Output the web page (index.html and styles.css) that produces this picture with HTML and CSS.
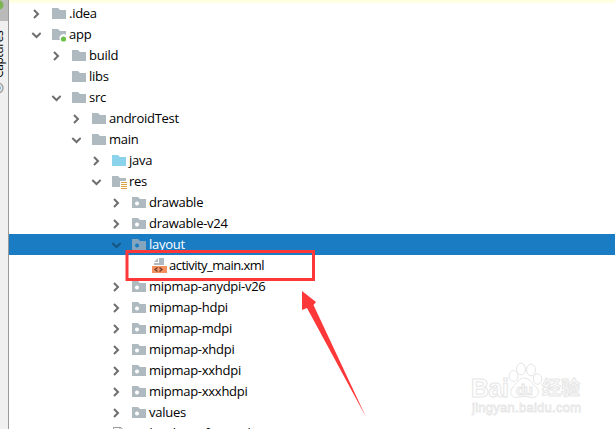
FILE: index.html
```
<!DOCTYPE html>
<html lang="en">

<head>
    <meta charset="UTF-8">
    <title>Project</title>
    <link rel="stylesheet" href="styles.css">
</head>

<body>

    <svg class="defs">
        <symbol id="right" viewBox="0 0 10 10"><path d="M3 1 L7 5 L3 9" /></symbol>
        <symbol id="down" viewBox="0 0 10 10"><path d="M1.3 3 L5.5 7 L9.7 3" /></symbol>
        <symbol id="folder" viewBox="0 0 16 16"><path d="M0 2 H6 L8 4 H14 V13 H0 Z" /></symbol>
        <symbol id="module" viewBox="0 0 16 16">
            <path d="M0 2 H6 L8 4 H14 V8 A4 4 0 0 0 8 13 H0 Z" />
            <circle cx="11.5" cy="12" r="2.6" fill="#6cc04a" />
        </symbol>
        <symbol id="package" viewBox="0 0 16 16">
            <path fill-rule="evenodd" d="M0 2 H6 L8 4 H14 V13 H0 Z M5 6.5 a2 2 0 1 0 .01 0 Z" />
        </symbol>
        <symbol id="resources" viewBox="0 0 16 16">
            <path d="M0 2 H6 L8 4 H14 V7 H8 V13 H0 Z" />
            <path d="M9 8.5 h6 M9 10.5 h6 M9 12.5 h6 M9 14.5 h6" stroke="#dba243" />
        </symbol>
        <symbol id="xml" viewBox="0 0 16 16">
            <path d="M7 0 H12 V7 H2 V5 H7 Z M6 0 V4 H2 Z" />
            <path d="M0 8 H15 V15 H0 Z" fill="#f4915f" />
            <path d="M5.5 9.5 L3 11.5 L5.5 13.5 M7.5 9.5 L10 11.5 L7.5 13.5" fill="none" stroke="#70402c" stroke-width="1.3" />
        </symbol>
        <symbol id="manifest" viewBox="0 0 16 16">
            <path d="M1.5 15 V1.5 H9 L11.5 4 V15 M8 2 V5 H11" fill="none" stroke="#999" />
        </symbol>
    </svg>

    <aside class="sidebar">
        <div class="tab active"><svg class="badge" viewBox="0 0 10 10"><circle cx="5" cy="5" r="4.5" fill="#7cb353" /><path d="M2 2 L6 6" stroke="#fff" /></svg></div>
        <span class="captures">Captures</span>
        <svg class="capture-icon" viewBox="0 0 12 12"><circle cx="6" cy="6" r="5" fill="#eee" stroke="#999" stroke-width="1.3" /><circle cx="6" cy="6" r="2.8" fill="#55a9dc" /></svg>
    </aside>

    <main class="tree">
        <div class="row l0"><svg class="arrow"><use href="#right" /></svg><svg class="icon"><use href="#folder" /></svg><span>.idea</span></div>
        <div class="row l0"><svg class="arrow"><use href="#down" /></svg><svg class="icon"><use href="#module" /></svg><span>app</span></div>
        <div class="row l1"><svg class="arrow"><use href="#right" /></svg><svg class="icon"><use href="#folder" /></svg><span>build</span></div>
        <div class="row l1"><svg class="arrow"></svg><svg class="icon"><use href="#folder" /></svg><span>libs</span></div>
        <div class="row l1"><svg class="arrow"><use href="#down" /></svg><svg class="icon"><use href="#folder" /></svg><span>src</span></div>
        <div class="row l2"><svg class="arrow"><use href="#right" /></svg><svg class="icon"><use href="#folder" /></svg><span>androidTest</span></div>
        <div class="row l2"><svg class="arrow"><use href="#down" /></svg><svg class="icon"><use href="#folder" /></svg><span>main</span></div>
        <div class="row l3"><svg class="arrow"><use href="#right" /></svg><svg class="icon source"><use href="#folder" /></svg><span>java</span></div>
        <div class="row l3"><svg class="arrow"><use href="#down" /></svg><svg class="icon"><use href="#resources" /></svg><span>res</span></div>
        <div class="row l4"><svg class="arrow"><use href="#right" /></svg><svg class="icon"><use href="#package" /></svg><span>drawable</span></div>
        <div class="row l4"><svg class="arrow"><use href="#right" /></svg><svg class="icon"><use href="#package" /></svg><span>drawable-v24</span></div>
        <div class="row l4 selected"><svg class="arrow"><use href="#down" /></svg><svg class="icon"><use href="#package" /></svg><span>layout</span></div>
        <div class="row l5"><svg class="arrow"></svg><svg class="icon"><use href="#xml" /></svg><span class="file">activity_main.xml</span></div>
        <div class="row l4"><svg class="arrow"><use href="#right" /></svg><svg class="icon"><use href="#package" /></svg><span>mipmap-anydpi-v26</span></div>
        <div class="row l4"><svg class="arrow"><use href="#right" /></svg><svg class="icon"><use href="#package" /></svg><span>mipmap-hdpi</span></div>
        <div class="row l4"><svg class="arrow"><use href="#right" /></svg><svg class="icon"><use href="#package" /></svg><span>mipmap-mdpi</span></div>
        <div class="row l4"><svg class="arrow"><use href="#right" /></svg><svg class="icon"><use href="#package" /></svg><span>mipmap-xhdpi</span></div>
        <div class="row l4"><svg class="arrow"><use href="#right" /></svg><svg class="icon"><use href="#package" /></svg><span>mipmap-xxhdpi</span></div>
        <div class="row l4"><svg class="arrow"><use href="#right" /></svg><svg class="icon"><use href="#package" /></svg><span>mipmap-xxxhdpi</span></div>
        <div class="row l4"><svg class="arrow"><use href="#right" /></svg><svg class="icon"><use href="#package" /></svg><span>values</span></div>
        <div class="row l3"><svg class="arrow"></svg><svg class="icon"><use href="#manifest" /></svg><span>AndroidManifest.xml</span></div>
    </main>

    <!-- red box, arrow and watermark over the tree -->
    <svg class="overlay" viewBox="0 0 615 429">
        <rect x="127" y="251.5" width="186.5" height="28" fill="none" stroke="#fe3838" stroke-width="3" />
        <path d="M302 291 L316 302 L313.5 305 L366 417 L307 308 L302 310 Z" fill="#fe3838" />
        <g class="watermark">
            <text class="brand" x="471" y="397" textLength="38">Bai</text>
            <ellipse cx="513.5" cy="376" rx="4.5" ry="5.5" />
            <ellipse cx="521" cy="369" rx="4.5" ry="5.8" />
            <ellipse cx="531" cy="370" rx="4.5" ry="5.8" />
            <ellipse cx="537.5" cy="379" rx="4.2" ry="5.3" />
            <path d="M524 378 C530 378 532 384 537 388 C542 395 534 399 529 397 Q524 396 519 397 C512 399 508 393 513 387 C517 383 519 378 524 378 Z" />
            <text class="du" x="516" y="395" textLength="17">du</text>
            <text class="cjk" x="542" y="395" textLength="38">经验</text>
            <text class="url" x="472" y="412" textLength="109">jingyan.baidu.com</text>
        </g>
    </svg>

</body>

</html>
```
FILE: styles.css
```
body {
    margin: 0;
    height: 429px;
    display: flex;
    overflow: hidden;
    background-color: white;
    font-family: "Open Sans", "Noto Sans", sans-serif;
    font-size: 13px;
    color: black;
}

.defs {
    position: absolute;
    width: 0;
    height: 0;
}

.sidebar {
    width: 8px;
    flex: none;
    overflow: hidden;
    background-color: #f0f0f0;
    border-right: 1px solid #999;
}

.tab {
    height: 21px;
    background-color: #bababa;
}

.badge {
    display: block;
    width: 10px;
    height: 10px;
    margin-left: -6px;
}

.captures {
    display: block;
    height: 47px;
    margin-top: 10px;
    margin-left: -9px;
    writing-mode: vertical-rl;
    transform: rotate(180deg);
    font-size: 12px;
    letter-spacing: -.4px;
    line-height: 16px;
    width: 16px;
}

.capture-icon {
    display: block;
    width: 12px;
    height: 12px;
    margin-top: 4px;
    margin-left: -8px;
}

.tree {
    flex: 1;
    border-top: 3px solid #ffffe1;
    letter-spacing: -.27px;
}

.row {
    height: 21px;
    display: flex;
    align-items: center;
    line-height: 21px;
    white-space: nowrap;
}

.file {
    letter-spacing: -.53px;
}

.l0 { padding-left: 22px; }
.l1 { padding-left: 42px; }
.l2 { padding-left: 62px; }
.l3 { padding-left: 82px; }
.l4 { padding-left: 102px; }
.l5 { padding-left: 122px; }

.arrow {
    width: 10px;
    height: 10px;
    margin-right: 11px;
    fill: none;
    stroke: #6e6e6e;
    stroke-width: 2;
}

.icon {
    width: 16px;
    height: 16px;
    margin-right: 1px;
    fill: #afb9c0;
}

.source {
    fill: #8bd3eb;
}

.selected {
    background-color: #1a7dc4;
    color: white;
}

.selected .arrow {
    stroke: #17557f;
}

.selected .icon {
    fill: #84a5bd;
}

.overlay {
    position: absolute;
    top: 0;
    left: 0;
    width: 615px;
    height: 429px;
}

.watermark {
    fill: white;
    stroke: #e6e6e6;
    stroke-width: 1;
    font-family: "Liberation Sans", sans-serif;
}

.brand {
    font-size: 25px;
    font-weight: bold;
}

.du {
    font-size: 15px;
    font-weight: bold;
}

.cjk {
    font-family: "Noto Sans CJK SC", sans-serif;
    font-size: 19px;
    font-weight: bold;
}

.url {
    font-size: 13px;
    stroke-width: .8;
}
```
